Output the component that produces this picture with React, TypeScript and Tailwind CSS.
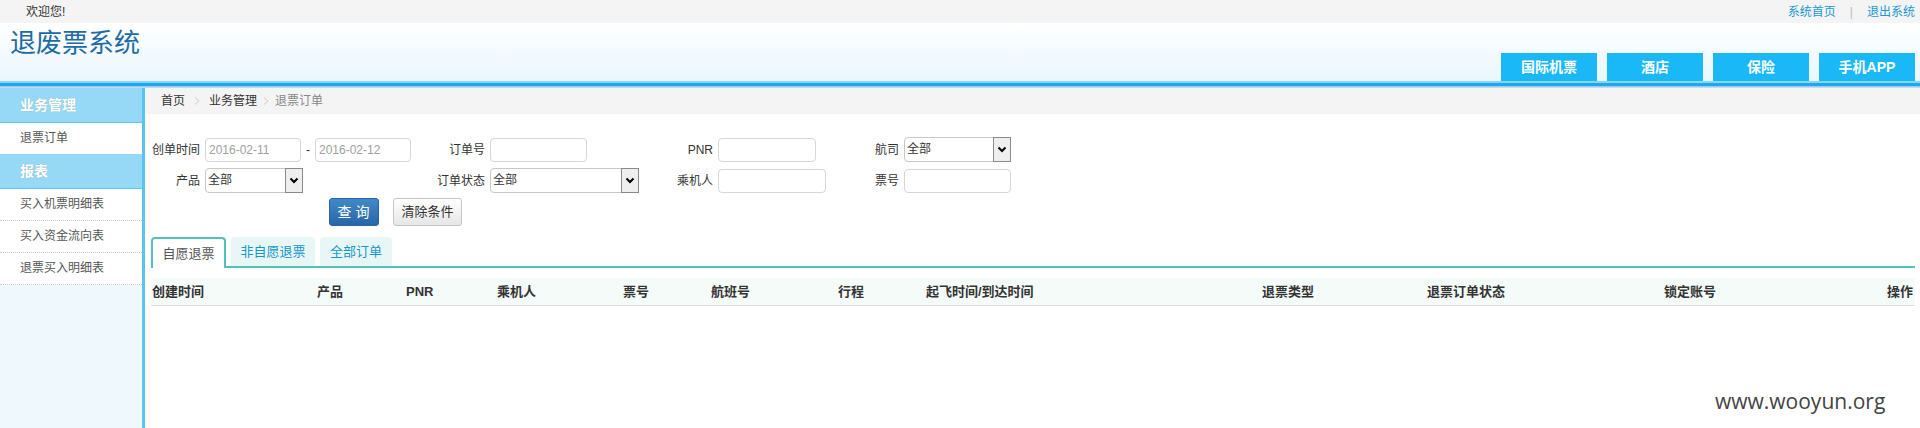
import * as React from "react";

const cjk = '"Liberation Sans", "Noto Sans CJK SC", sans-serif';

// 下拉框（老式样式，右侧灰色按钮）
function FakeSelect({ width, value = "全部" }: { width: string; value?: string }) {
  return (
    <div className={`${width} h-[25px] flex border border-[#c8c8c8] rounded-l-[4px] bg-white`}>
      <div className="flex-1 pl-[2px] text-[12px] leading-[23px] text-[#333]">{value}</div>
      <div className="w-[18px] h-[25px] -mt-px -mr-px border border-[#8a8a8a] bg-[#efefef] flex items-center justify-center">
        <svg width="10" height="7" viewBox="0 0 10 7">
          <path d="M1.5 1.5 L5 5 L8.5 1.5" fill="none" stroke="#000" strokeWidth="2" />
        </svg>
      </div>
    </div>
  );
}

function TextInput({ width, value }: { width: string; value?: string }) {
  return (
    <div className={`${width} h-[24px] border border-[#d6d6d6] rounded-[4px] bg-white pl-[3px] text-[12px] leading-[22px] text-[#a0a0a0]`}>
      {value}
    </div>
  );
}

function Label({ children }: { children: React.ReactNode }) {
  return <div className="text-right text-[12px] text-[#333] pr-[5px] leading-[24px]">{children}</div>;
}

const columns = [
  "创建时间",
  "产品",
  "PNR",
  "乘机人",
  "票号",
  "航班号",
  "行程",
  "起飞时间/到达时间",
  "退票类型",
  "退票订单状态",
  "锁定账号",
];

export default function App() {
  return (
    <div className="w-[1920px] h-[428px] overflow-hidden bg-white relative" style={{ fontFamily: cjk }}>
      {/* 顶部条 */}
      <div className="h-[23px] bg-[#f4f4f4] flex items-center justify-between pl-[26px] pr-[5px] text-[12px]">
        <span className="text-[#333]">欢迎您!</span>
        <div className="flex items-center text-[#1a98d2]">
          <span>系统首页</span>
          <span className="mx-[14px] text-[#bbb]">|</span>
          <span>退出系统</span>
        </div>
      </div>

      {/* 标题栏 */}
      <div className="h-[58px] bg-gradient-to-b from-white to-[#e9f6fe] flex justify-between pl-[10px] pr-[5px]">
        <div className="pt-[4px] text-[26px] leading-[32px] text-[#1d6ba6]">退废票系统</div>
        <div className="flex items-end gap-[10px]">
          {["国际机票", "酒店", "保险", "手机APP"].map((t) => (
            <div key={t} className="w-[96px] h-[28px] bg-[#1ab8f7] text-white font-bold text-[14px] flex items-center justify-center">
              {t}
            </div>
          ))}
        </div>
      </div>

      {/* 蓝色分隔线 */}
      <div className="h-[2px] bg-[#8ad4f6]" />
      <div className="h-[3px] bg-[#1ca9ef]" />
      <div className="h-px bg-[#8fd0f0]" />
      <div className="h-px bg-[#c9dbe7]" />

      <div className="flex h-[340px]">
        {/* 侧边栏 */}
        <div className="w-[145px] bg-[#eef8fd] border-r-[3px] border-[#5bc3ef]">
          <div className="h-[35px] bg-[#96d9f6] border-b border-[#5fc6f0] pl-[20px] text-[14px] font-bold text-white leading-[34px] [text-shadow:0_0_1px_#8aa]">
            业务管理
          </div>
          <div className="h-[31px] bg-white pl-[20px] text-[12px] text-[#555] leading-[31px]">退票订单</div>
          <div className="h-[35px] bg-[#96d9f6] border-b border-[#5fc6f0] pl-[20px] text-[14px] font-bold text-white leading-[34px] [text-shadow:0_0_1px_#8aa]">
            报表
          </div>
          {["买入机票明细表", "买入资金流向表", "退票买入明细表"].map((t) => (
            <div key={t} className="h-[32px] bg-white border-b border-dotted border-[#ccc] pl-[20px] text-[12px] text-[#555] leading-[31px]">
              {t}
            </div>
          ))}
        </div>

        {/* 主区域 */}
        <div className="flex-1">
          {/* 面包屑 */}
          <div className="h-[26px] bg-[#f4f4f4] flex items-center pl-[16px] text-[12px]">
            <span className="text-[#333]">首页</span>
            <svg width="20" height="10" viewBox="0 0 20 10" className="mx-[2px]">
              <path d="M8 1.5 L12 5 L8 8.5" fill="none" stroke="#ccc" strokeWidth="1" />
            </svg>
            <span className="text-[#333]">业务管理</span>
            <svg width="20" height="10" viewBox="0 0 20 10" className="mx-[-1px]">
              <path d="M8 1.5 L12 5 L8 8.5" fill="none" stroke="#ccc" strokeWidth="1" />
            </svg>
            <span className="text-[#888]">退票订单</span>
          </div>

          {/* 查询条件 */}
          <div className="pt-[23px] grid grid-cols-[60px_214px_71px_159px_69px_114px_72px_107px] gap-y-[6px] items-center">
            <Label>创单时间</Label>
            <div className="flex items-center">
              <TextInput width="w-[96px]" value="2016-02-11" />
              <span className="w-[14px] text-center text-[12px] text-[#333]">-</span>
              <TextInput width="w-[96px]" value="2016-02-12" />
            </div>
            <Label>订单号</Label>
            <TextInput width="w-[97px]" />
            <Label>PNR</Label>
            <TextInput width="w-[98px]" />
            <Label>航司</Label>
            <FakeSelect width="w-[107px]" />

            <Label>产品</Label>
            <FakeSelect width="w-[98px]" />
            <Label>订单状态</Label>
            <FakeSelect width="w-[149px]" />
            <Label>乘机人</Label>
            <TextInput width="w-[108px]" />
            <Label>票号</Label>
            <TextInput width="w-[107px]" />
          </div>

          <div className="flex gap-[14px] pl-[184px] pt-[5px]">
            <div className="w-[50px] h-[28px] rounded-[3px] border border-[#2b639c] bg-gradient-to-b from-[#4289c9] to-[#2866a7] text-white text-[14px] flex items-center justify-center tracking-[4px] pl-[3px]">
              查询
            </div>
            <div className="w-[69px] h-[28px] rounded-[3px] border border-[#c4c4c4] bg-gradient-to-b from-white to-[#e6e6e6] text-[#333] text-[13px] flex items-center justify-center">
              清除条件
            </div>
          </div>

          {/* 标签页 */}
          <div className="pl-[6px] pr-[5px] pt-[11px]">
            <div className="flex items-end border-b-2 border-[#52c2b8] h-[31px]">
              <div className="w-[75px] h-[31px] -mb-[2px] bg-white border-2 border-b-0 border-[#52c2b8] rounded-t-[4px] text-[13px] text-[#555] flex items-center justify-center">
                自愿退票
              </div>
              <div className="ml-[5px] w-[84px] h-[29px] bg-[#e8f6f6] rounded-t-[4px] text-[13px] text-[#1397cd] flex items-center justify-center">
                非自愿退票
              </div>
              <div className="ml-[5px] w-[72px] h-[29px] bg-[#e8f6f6] rounded-t-[4px] text-[13px] text-[#1397cd] flex items-center justify-center">
                全部订单
              </div>
            </div>

            {/* 表头 */}
            <div className="mt-[10px] h-[28px] bg-[#f4fbf9] border-b border-[#dcdcdc] grid grid-cols-[165px_89px_91px_126px_88px_127px_88px_336px_165px_237px_200px_1fr] items-center text-[13px] font-bold text-[#333]">
              {columns.map((c) => (
                <div key={c} className="pl-px whitespace-nowrap">{c}</div>
              ))}
              <div className="text-right pr-[2px]">操作</div>
            </div>
          </div>
        </div>
      </div>

      {/* 水印 */}
      <div
        className="absolute left-[1715px] top-[386px] text-[21px] text-[#444]"
        style={{ fontFamily: '"Open Sans", sans-serif' }}
      >
        www.wooyun.org
      </div>
    </div>
  );
}
